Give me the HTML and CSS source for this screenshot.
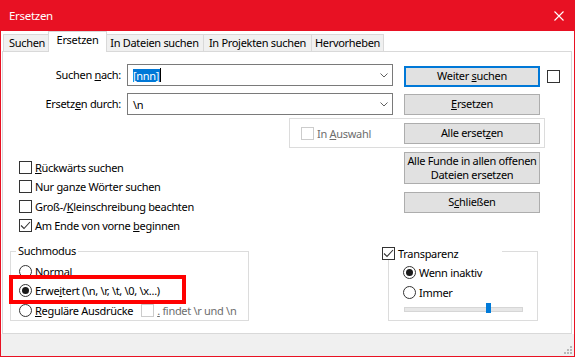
FILE: index.html
```html
<!DOCTYPE html>
<html lang="de">
<head>
<meta charset="utf-8">
<title>Ersetzen</title>
<link rel="stylesheet" href="styles.css">
</head>
<body>
<div class="window">
  <div class="titlebar">
    <span class="title">Ersetzen</span>
    <svg class="close" width="10" height="10" viewBox="0 0 10 10"><path d="M0.5 0.5 L9.5 9.5 M9.5 0.5 L0.5 9.5" stroke="#fff" stroke-width="1.1" fill="none"/></svg>
  </div>
  <div class="client">
    <div class="tabs">
      <div class="tab t1">Suchen</div>
      <div class="tab t2 active">Ersetzen</div>
      <div class="tab t3">In Dateien suchen</div>
      <div class="tab t4">In Projekten suchen</div>
      <div class="tab t5 last">Hervorheben</div>
    </div>
    <div class="panel">
      <div class="row row-a">
        <div class="lbl">Suchen <u>n</u>ach:</div>
        <div class="combo"><span class="sel">[nnn]</span><span class="caret"></span><svg class="chev" width="8" height="5" viewBox="0 0 8 5"><path d="M0.5 0.5 L4 4 L7.5 0.5" stroke="#606060" stroke-width="1" fill="none"/></svg></div>
        <div class="btn focus"><span>Weiter <u>s</u>uchen</span></div>
        <span class="cb cb-top"></span>
      </div>
      <div class="row row-b">
        <div class="lbl">Ersetz<u>e</u>n durch:</div>
        <div class="combo"><span class="val">\n</span><svg class="chev" width="8" height="5" viewBox="0 0 8 5"><path d="M0.5 0.5 L4 4 L7.5 0.5" stroke="#606060" stroke-width="1" fill="none"/></svg></div>
        <div class="btn btn-b"><span><u>E</u>rsetzen</span></div>
      </div>
      <div class="group-sel">
        <span class="cb disabled"></span>
        <span class="opt-text dis">In <u>A</u>uswahl</span>
        <div class="btn btn-all"><span>Alle erset<u>z</u>en</span></div>
      </div>
      <div class="row-d">
        <div class="checks">
          <div class="opt"><span class="cb"></span><span class="opt-text"><u>R</u>ückwärts suchen</span></div>
          <div class="opt o2"><span class="cb"></span><span class="opt-text">Nur <u>g</u>anze Wörter suchen</span></div>
          <div class="opt o3"><span class="cb"></span><span class="opt-text">Groß-/<u>K</u>leinschreibung beachten</span></div>
          <div class="opt o4"><span class="cb checked"><svg width="11" height="11" viewBox="0 0 11 11"><path d="M1 5.5 L4 8.5 L10 2" stroke="#333" stroke-width="1.1" fill="none"/></svg></span><span class="opt-text">Am Ende von vorne <u>b</u>eginnen</span></div>
        </div>
        <div class="btncol">
          <div class="btn btn-tall"><span>Alle Funde in allen offenen<br>Dateien ersetzen</span></div>
          <div class="btn btn-close"><span>S<u>c</u>hließen</span></div>
        </div>
      </div>
      <div class="row-e">
        <div class="group g-mode">
          <span class="legend">Suchmodus</span>
          <div class="opt r1"><span class="radio"></span><span class="opt-text"><u>N</u>ormal</span></div>
          <div class="opt r2"><span class="radio on"></span><span class="opt-text">Erwe<u>i</u>tert (\n, \r, \t, \0, \x...)</span></div>
          <div class="opt r3"><span class="radio"></span><span class="opt-text"><u>R</u>eguläre Ausdrücke</span><span class="cb disabled cb-dot"></span><span class="opt-text dis"><u>.</u> findet \r und \n</span></div>
          <div class="mark"></div>
        </div>
        <div class="group g-trans">
          <div class="legend-cb"><span class="cb checked"><svg width="11" height="11" viewBox="0 0 11 11"><path d="M1 5.5 L4 8.5 L10 2" stroke="#333" stroke-width="1.1" fill="none"/></svg></span><span class="opt-text">Transparenz</span></div>
          <div class="opt t-r1"><span class="radio on"></span><span class="opt-text">Wenn inaktiv</span></div>
          <div class="opt t-r2"><span class="radio"></span><span class="opt-text">Immer</span></div>
          <div class="slider"><div class="track"></div><div class="thumb"></div></div>
        </div>
      </div>
    </div>
    <div class="footer">
      <svg width="8" height="8" viewBox="0 0 8 8"><g fill="#b8b8b8"><rect x="6" y="0" width="2" height="2"/><rect x="3" y="3" width="2" height="2"/><rect x="6" y="3" width="2" height="2"/><rect x="0" y="6" width="2" height="2"/><rect x="3" y="6" width="2" height="2"/><rect x="6" y="6" width="2" height="2"/></g></svg>
    </div>
  </div>
</div>
</body>
</html>
```

FILE: styles.css
```css
* { box-sizing: border-box; }
html, body { margin: 0; padding: 0; }
body {
  font-family: "Noto Sans", "DejaVu Sans", sans-serif;
  font-size: 11px;
  letter-spacing: -0.3px;
  color: #000;
  background: #fff;
}
u { text-decoration: underline; text-decoration-thickness: 1px; text-underline-offset: 1px; }

.window {
  width: 575px;
  height: 357px;
  background: #e81123;
  padding: 0 1px 1px 1px;
  display: flex;
  flex-direction: column;
}
.titlebar {
  height: 31px;
  flex: none;
  display: flex;
  align-items: center;
  justify-content: space-between;
  padding: 0 10px 0 8px;
  color: #fff;
  font-size: 11.5px;
}
.close { display: block; }

.client {
  flex: 1;
  background: #fff;
  display: flex;
  flex-direction: column;
}

.tabs {
  height: 20px;
  flex: none;
  display: flex;
  align-items: flex-end;
  padding-left: 2px;
  position: relative;
  z-index: 1;
}
.tab {
  height: 17px;
  border: 1px solid #d9d9d9;
  border-bottom: none;
  border-right: none;
  background: #f0f0f0;
  display: flex;
  align-items: center;
  justify-content: center;
  white-space: nowrap;
  padding-bottom: 1px;
}
.tab.last { border-right: 1px solid #d9d9d9; }
.tab.active {
  height: 21px;
  margin: 0 -2px -1px -2px;
  background: #fff;
  border-right: 1px solid #d9d9d9;
  position: relative;
  z-index: 2;
  padding-bottom: 5px;
}
.t1 { width: 47px; }
.t2 { width: 59px; }
.t3 { width: 98px; }
.t4 { width: 108px; }
.t5 { width: 73px; }

.panel {
  height: 283px;
  flex: none;
  margin: 0 2px 0 1px;
  border: 1px solid #d9d9d9;
  padding-top: 12px;
}

.row { display: flex; align-items: flex-start; }
.row-a { height: 29px; }
.row-b { height: 25px; }
.lbl { width: 118px; text-align: right; line-height: 21px; white-space: nowrap; }
.combo {
  margin-left: 6px;
  width: 266px;
  height: 22px;
  border: 1px solid #7a7a7a;
  background: #fff;
  display: flex;
  align-items: center;
  padding: 0 4px 0 5px;
}
.sel {
  background: #0078d7;
  color: #fff;
  line-height: 13px;
  height: 13px;
  padding: 0 1px 0 0;
}
.caret { width: 1px; height: 14px; background: #000; }
.val { line-height: 13px; }
.chev { margin-left: auto; display: block; }

.btn {
  width: 136px;
  height: 21px;
  border: 1px solid #adadad;
  background: #e1e1e1;
  display: flex;
  align-items: center;
  justify-content: center;
  text-align: center;
  white-space: nowrap;
  line-height: 14px;
  padding-bottom: 1px;
}
.btn.focus { border: 2px solid #0078d7; }
.row-a .btn { margin-left: 11px; margin-top: 2px; }
.row-b .btn { margin-left: 11px; margin-top: 1px; }

.cb {
  width: 13px;
  height: 13px;
  flex: none;
  border: 1px solid #333;
  background: #fff;
  display: flex;
  align-items: center;
  justify-content: center;
}
.cb svg { display: block; }
.cb.disabled { border-color: #cccccc; }
.cb-top { margin-left: 7px; margin-top: 6px; }

.opt-text { margin-left: 3px; white-space: nowrap; line-height: 13px; }
.dis { color: #6d6d6d; }

.group-sel {
  margin-left: 286px;
  width: 256px;
  height: 30px;
  border: 1px solid #dcdcdc;
  display: flex;
  align-items: center;
  padding: 3px 4px 2px 11px;
}
.btn-all { margin-left: auto; }

.row-d { display: flex; height: 103px; }
.checks { width: 401px; padding: 13px 0 0 16px; }
.opt { display: flex; align-items: center; height: 13px; }
.o2 { margin-top: 6px; }
.o3 { margin-top: 7px; }
.o4 { margin-top: 6px; }
.btncol { padding-top: 4px; }
.btn-tall { height: 32px; white-space: normal; line-height: 14px; padding-bottom: 0; }
.btn-close { margin-top: 8px; }

.row-e { display: flex; }
.group {
  position: relative;
  height: 70px;
  border: 1px solid #dcdcdc;
}
.g-mode { margin-left: 7px; width: 239px; padding: 13px 0 0 8px; }
.g-trans { margin-left: 139px; width: 150px; padding: 14px 0 0 14px; }
.legend {
  position: absolute;
  left: 5px;
  top: -8px;
  padding: 0 2px;
  background: #fff;
  line-height: 13px;
}
.legend-cb {
  position: absolute;
  left: -7px;
  top: -5px;
  width: 120px;
  height: 13px;
  background: #fff;
  display: flex;
  align-items: center;
}
.r2 { margin-top: 6px; }
.r3 { margin-top: 7px; }
.cb-dot { margin-left: 8px; }
.t-r2 { margin-top: 7px; }

.radio {
  width: 13px;
  height: 13px;
  flex: none;
  border: 1px solid #333;
  border-radius: 50%;
  background: #fff;
  display: flex;
  align-items: center;
  justify-content: center;
}
.radio.on::after {
  content: "";
  width: 7px;
  height: 7px;
  border-radius: 50%;
  background: #1a1a1a;
}

.mark {
  position: absolute;
  left: -2px;
  top: 23px;
  width: 177px;
  height: 29px;
  border: 4px solid #ff0000;
}

.slider {
  position: relative;
  margin-top: 4px;
  margin-left: 1px;
  width: 119px;
  height: 10px;
}
.track {
  position: absolute;
  left: 0;
  top: 4px;
  width: 119px;
  height: 5px;
  background: #e7e7e7;
  border: 1px solid #d6d6d6;
}
.thumb {
  position: absolute;
  left: 82px;
  top: 0;
  width: 5px;
  height: 10px;
  background: #007ad9;
}

.footer {
  flex: 1;
  background: #f0f0f0;
  display: flex;
  justify-content: flex-end;
  align-items: flex-end;
  padding: 0 2px 2px 0;
}
.footer svg { display: block; }
```
